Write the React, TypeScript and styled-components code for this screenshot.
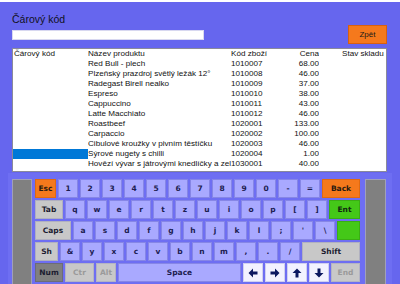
import * as React from 'react'
import styled, { createGlobalStyle, css } from 'styled-components'

const GlobalStyle = createGlobalStyle`
  html, body {
    margin: 0;
    padding: 0;
    background: #6666ee;
    overflow: hidden;
  }
  * {
    box-sizing: border-box;
  }
`

const Screen = styled.div`
  width: 400px;
  height: 284px;
  border-top: 2px solid #ffffff;
  display: flex;
  flex-direction: column;
  overflow: hidden;
  font-family: "Liberation Sans", Arial, sans-serif;
`

const Header = styled.div`
  display: flex;
  justify-content: space-between;
  align-items: flex-end;
  padding: 11px 13px 0 12px;
`

const HeaderLeft = styled.div`
  display: flex;
  flex-direction: column;
`

const Title = styled.div`
  font-size: 10.5px;
  line-height: 12px;
  color: #111122;
`

const CodeInput = styled.div`
  width: 192px;
  height: 10px;
  margin: 5px 0 4px;
  background: #ffffff;
  border: 1px solid #d8d8f0;
`

const BackButton = styled.button`
  width: 39px;
  height: 19px;
  padding: 0;
  border: 1px solid #d86010;
  background: #f5791c;
  color: #1a1a1a;
  font-family: "Liberation Sans", Arial, sans-serif;
  font-size: 8px;
`

const Table = styled.div`
  margin: 4px 13px 0 12px;
  height: 124px;
  background: #ffffff;
  border: 1px solid #8a8a9a;
  overflow: hidden;
`

const Row = styled.div`
  display: grid;
  grid-template-columns: 75px 143px 50px 38px 1fr;
  height: 10px;
  font-size: 8.1px;
  line-height: 10px;
  color: #111111;
`

const Cell = styled.div<{ $right?: boolean; $selected?: boolean; $pad?: number }>`
  overflow: hidden;
  white-space: nowrap;
  padding-left: ${p => p.$pad ?? 0}px;
  text-align: ${p => (p.$right ? 'right' : 'left')};
  background: ${p => (p.$selected ? '#0078d7' : 'transparent')};
`

const Keyboard = styled.div`
  flex: 1;
  margin: 1px 8px 0;
  padding: 6px 5px 0 4px;
  background: #6e6ef2;
  display: flex;
  gap: 3px;
`

const SideBar = styled.div`
  width: 20px;
  flex-shrink: 0;
  background: #808080;
  border: 1px solid #a0a0b8;
  border-bottom: none;
`

const RightBar = styled(SideBar)`
  width: 21px;
  margin-left: 2px;
`

const Keys = styled.div`
  width: 325px;
  display: flex;
  flex-direction: column;
  gap: 2px;
`

const KeyRow = styled.div`
  display: flex;
  gap: 2px;
  height: 19px;
`

type Tone = 'normal' | 'orange' | 'green' | 'grey' | 'dark' | 'off' | 'white'

const tones: Record<Tone, ReturnType<typeof css>> = {
  normal: css`background: #a9a9ff; border-color: #8686e6; color: #1c1c50;`,
  orange: css`background: #f5791c; border-color: #e06a10; color: #2a1a10;`,
  green: css`background: #44c818; border-color: #3aae14; color: #102a10;`,
  grey: css`background: #c8c8c8; border-color: #b0b0c0; color: #1c1c30;`,
  dark: css`background: #808080; border-color: #6c6c78; color: #1c1c30;`,
  off: css`background: #c8c8c8; border-color: #b4b4c4; color: #9a9a9a;`,
  white: css`background: #f2f2ff; border-color: #d0d0f0; color: #0c1860;`,
}

const Key = styled.div<{ $w?: number; $tone?: Tone }>`
  width: ${p => p.$w ?? 20}px;
  flex-shrink: 0;
  height: 19px;
  border: 1px solid;
  display: flex;
  align-items: center;
  justify-content: center;
  font-family: "DejaVu Sans", Verdana, sans-serif;
  font-weight: bold;
  font-size: 7.5px;
  ${p => tones[p.$tone ?? 'normal']}
`

const Arrow: React.FC<{ dir: 'left' | 'right' | 'up' | 'down' }> = ({ dir }) => {
  const rot = { up: 0, right: 90, down: 180, left: 270 }[dir]
  return (
    <svg width="10" height="10" viewBox="0 0 10 10">
      <g transform={`rotate(${rot} 5 5)`}>
        <polygon points="5,0.5 9.5,5 6.5,5 6.5,9.5 3.5,9.5 3.5,5 0.5,5" fill="#0c1860" />
      </g>
    </svg>
  )
}

// the last name is cut where its column ends, as on the device
const products = [
  ['Red Bull - plech', '1010007', '68.00'],
  ['Plzeňský prazdroj světlý ležák 12°', '1010008', '46.00'],
  ['Radegast Birell nealko', '1010009', '37.00'],
  ['Espreso', '1010010', '38.00'],
  ['Cappuccino', '1010011', '43.00'],
  ['Latte Macchiato', '1010012', '46.00'],
  ['Roastbeef', '1020001', '133.00'],
  ['Carpaccio', '1020002', '100.00'],
  ['Cibulové kroužky v pivním těstíčku', '1020003', '46.00'],
  ['Sýrové nugety s chilli', '1020004', '1.00'],
  ['Hovězí vývar s játrovými knedlíčky a zel', '1030001', '40.00'],
]

const row1 = ['1', '2', '3', '4', '5', '6', '7', '8', '9', '0', '-', '=']
const row2 = ['q', 'w', 'e', 'r', 't', 'z', 'u', 'i', 'o', 'p', '[', ']']
const row3 = ['a', 's', 'd', 'f', 'g', 'h', 'j', 'k', 'l', ';', "'", '\\']
const row4 = ['&', 'y', 'x', 'c', 'v', 'b', 'n', 'm', ',', '.', '/']

export default function App() {
  return (
    <>
      <GlobalStyle />
      <Screen>
        <Header>
          <HeaderLeft>
            <Title>Čárový kód</Title>
            <CodeInput />
          </HeaderLeft>
          <BackButton>Zpět</BackButton>
        </Header>
        <Table>
          <Row>
            <Cell $pad={1}>Čárový kód</Cell>
            <Cell>Název produktu</Cell>
            <Cell>Kód zboží</Cell>
            <Cell $right>Cena</Cell>
            <Cell $pad={23}>Stav skladu</Cell>
          </Row>
          {products.map(([name, code, price], i) => (
            <Row key={code}>
              <Cell $selected={i === 9} />
              <Cell>{name}</Cell>
              <Cell>{code}</Cell>
              <Cell $right>{price}</Cell>
              <Cell />
            </Row>
          ))}
        </Table>
        <Keyboard>
          <SideBar />
          <Keys>
            <KeyRow>
              <Key $w={21} $tone="orange">Esc</Key>
              {row1.map(k => <Key key={k}>{k}</Key>)}
              <Key $w={38} $tone="orange">Back</Key>
            </KeyRow>
            <KeyRow>
              <Key $w={28} $tone="grey">Tab</Key>
              {row2.map(k => <Key key={k}>{k}</Key>)}
              <Key $w={31} $tone="green">Ent</Key>
            </KeyRow>
            <KeyRow>
              <Key $w={36} $tone="grey">Caps</Key>
              {row3.map(k => <Key key={k}>{k}</Key>)}
              <Key $w={23} $tone="green" />
            </KeyRow>
            <KeyRow>
              <Key $w={23} $tone="grey">Sh</Key>
              {row4.map(k => <Key key={k}>{k}</Key>)}
              <Key $w={58} $tone="grey">Shift</Key>
            </KeyRow>
            <KeyRow>
              <Key $w={28} $tone="dark">Num</Key>
              <Key $w={29} $tone="off">Ctr</Key>
              <Key $w={20} $tone="off">Alt</Key>
              <Key $w={123}>Space</Key>
              <Key $tone="white"><Arrow dir="left" /></Key>
              <Key $tone="white"><Arrow dir="right" /></Key>
              <Key $tone="white"><Arrow dir="up" /></Key>
              <Key $tone="white"><Arrow dir="down" /></Key>
              <Key $w={29} $tone="off">End</Key>
            </KeyRow>
          </Keys>
          <RightBar />
        </Keyboard>
      </Screen>
    </>
  )
}
